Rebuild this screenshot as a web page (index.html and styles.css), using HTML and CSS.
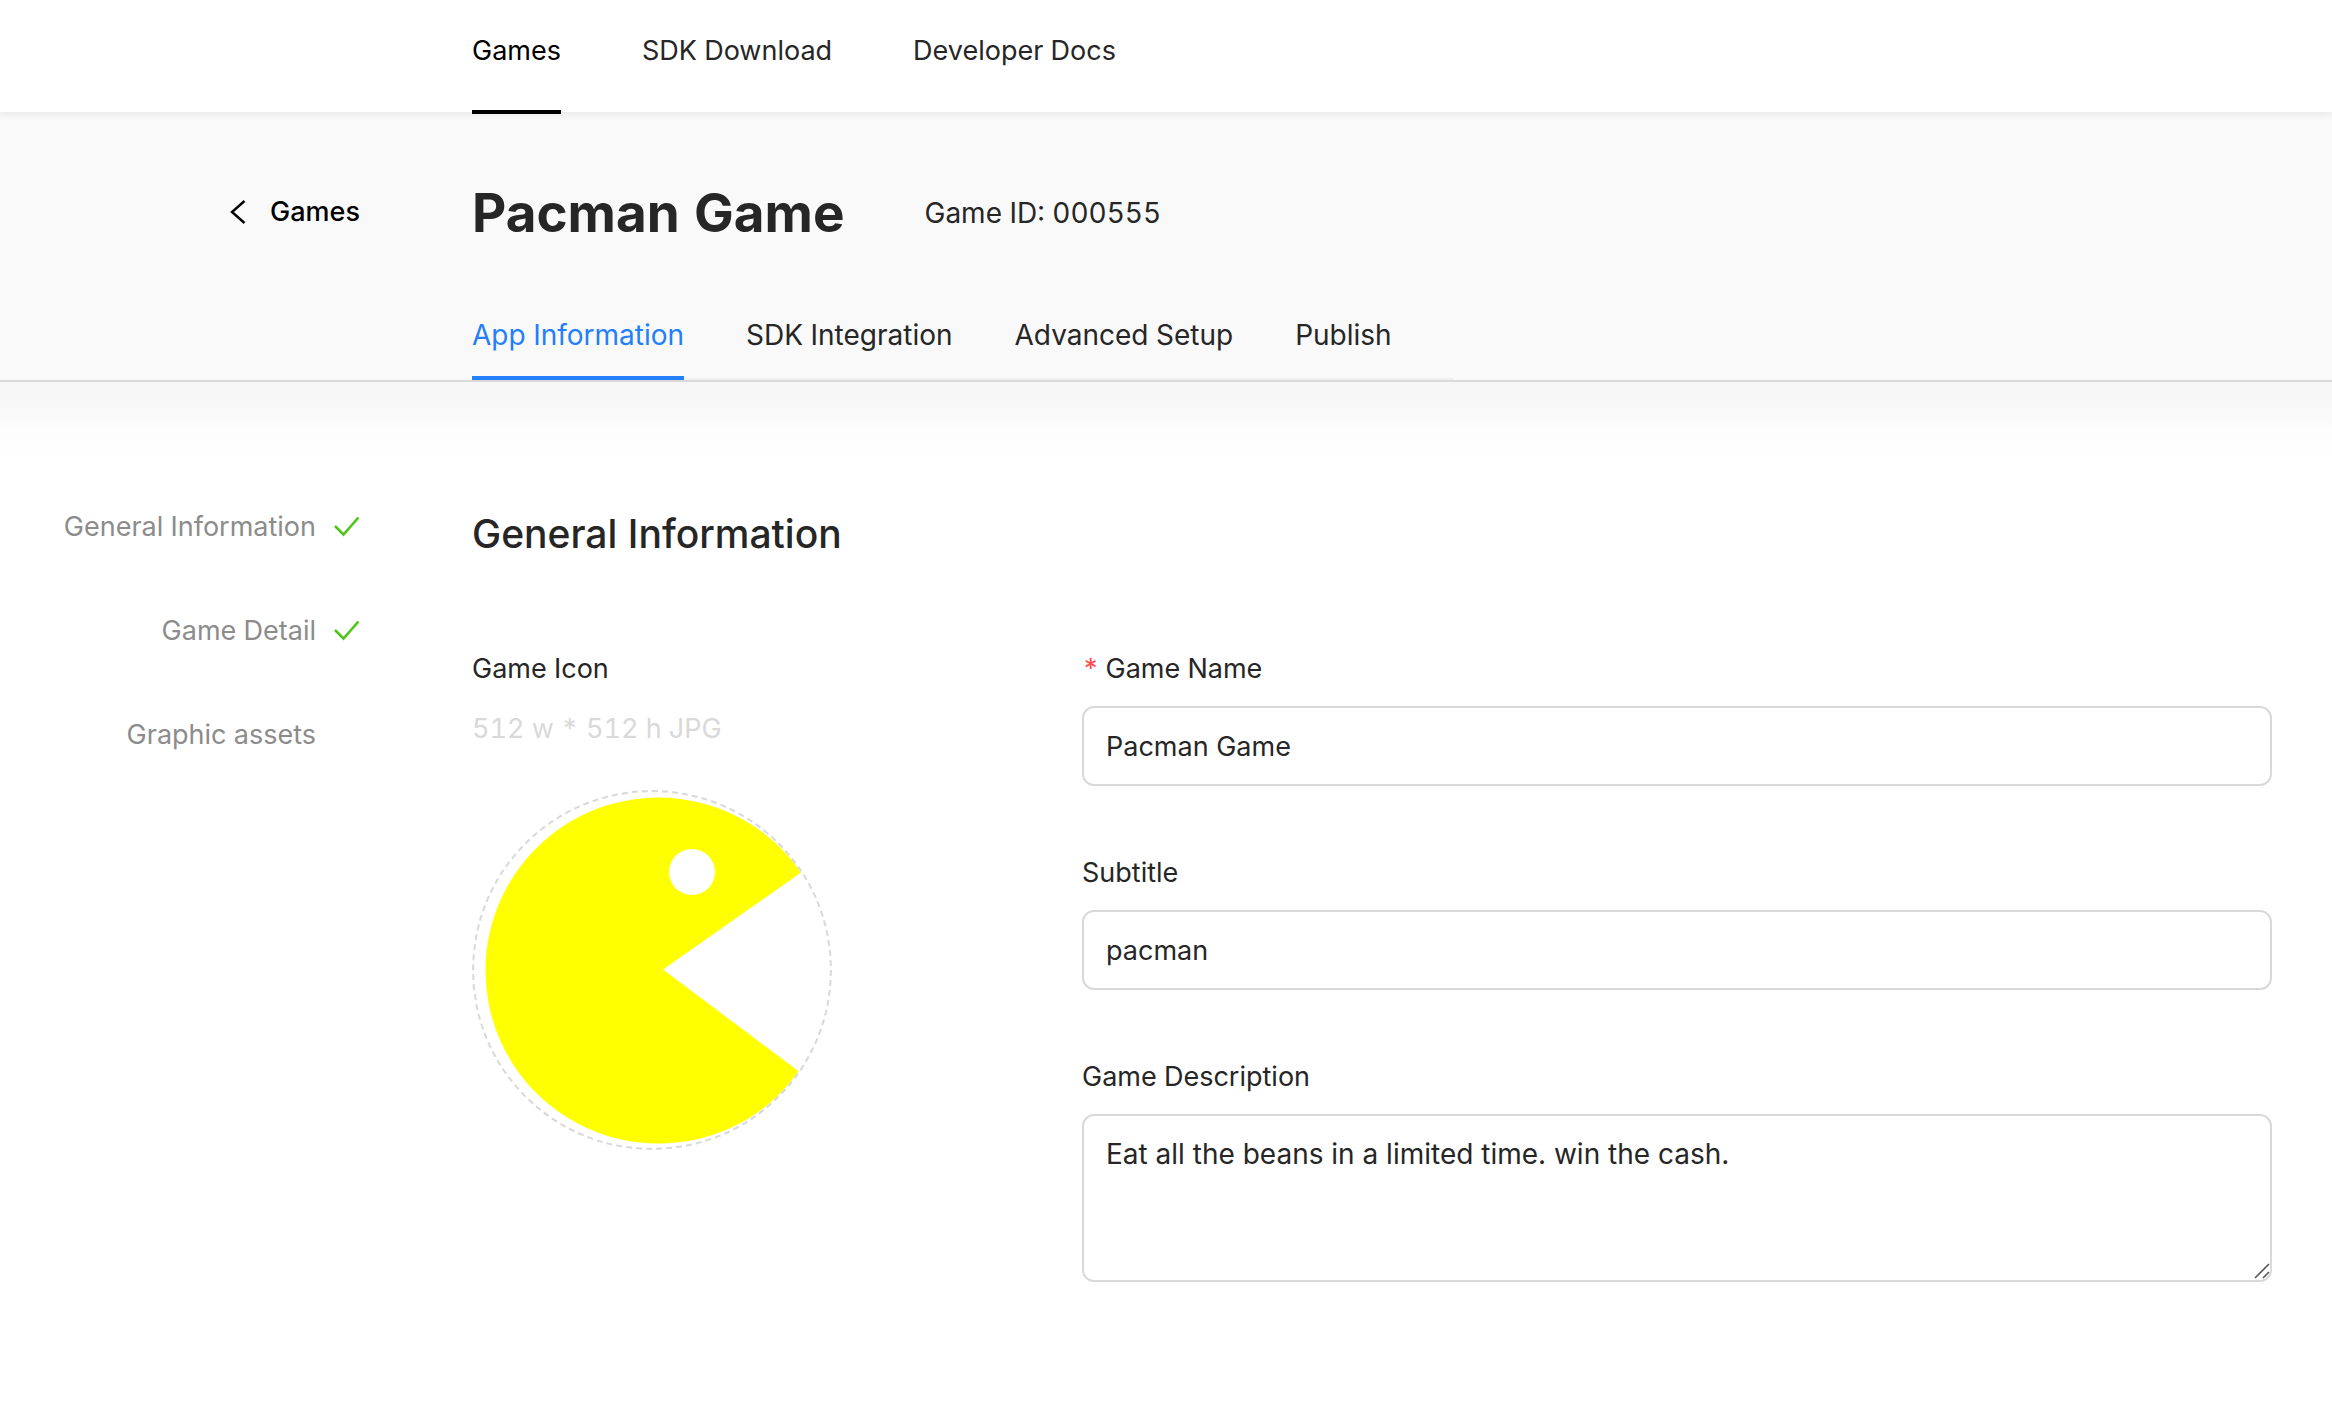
FILE: index.html
```html
<!DOCTYPE html>
<html lang="en">
<head>
<meta charset="utf-8">
<meta name="viewport" content="width=device-width, initial-scale=1">
<title>Pacman Game</title>
<link rel="stylesheet" href="styles.css">
</head>
<body>
<header class="topbar">
  <nav class="topnav" aria-label="Main">
    <a class="topnav-link is-active" href="#games">Games</a>
    <a class="topnav-link" href="#sdk">SDK Download</a>
    <a class="topnav-link" href="#docs">Developer Docs</a>
  </nav>
</header>

<section class="game-header">
  <a class="back" href="#games">
    <svg class="back-icon" viewBox="0 0 16 24" aria-hidden="true"><path d="M14.500 1 2 12l12.500 11"/></svg>
    Games
  </a>
  <div class="game-main">
    <div class="title-row">
      <h1 class="title">Pacman Game</h1>
      <span class="game-id">Game ID: 000555</span>
    </div>
    <nav class="tabs" aria-label="Game">
      <a class="tab is-active" href="#info">App Information</a>
      <a class="tab" href="#integration">SDK Integration</a>
      <a class="tab" href="#advanced">Advanced Setup</a>
      <a class="tab" href="#publish">Publish</a>
    </nav>
  </div>
</section>

<main class="content">
  <nav class="steps" aria-label="Sections">
    <a class="step" href="#general">General Information
      <svg class="check" viewBox="0 0 26 20" aria-hidden="true"><path d="M1 9 9.500 17.500 24.500 .5"/></svg>
    </a>
    <a class="step" href="#detail">Game Detail
      <svg class="check" viewBox="0 0 26 20" aria-hidden="true"><path d="M1 9 9.500 17.500 24.500 .5"/></svg>
    </a>
    <a class="step" href="#assets">Graphic assets
      <span class="check"></span>
    </a>
  </nav>

  <form class="form" id="general">
    <h2 class="form-title">General Information</h2>
    <div class="form-columns">
      <div class="icon-field">
        <span class="label">Game Icon</span>
        <span class="hint">512 w * 512 h JPG</span>
        <button class="icon-upload" type="button" aria-label="Change game icon">
          <svg viewBox="0 0 356 356" aria-hidden="true">
            <path fill="#ff0" d="M189 177.500 327 80.500A173 173 0 1 0 325 279.500Z"/>
            <circle cx="218" cy="80" r="23" fill="#fff"/>
          </svg>
        </button>
      </div>
      <div class="fields">
        <div class="field">
          <label class="label" for="name"><span class="required">*</span>Game Name</label>
          <input class="control" id="name" type="text" value="Pacman Game" required>
        </div>
        <div class="field">
          <label class="label" for="subtitle">Subtitle</label>
          <input class="control" id="subtitle" type="text" value="pacman">
        </div>
        <div class="field">
          <label class="label" for="description">Game Description</label>
          <div class="area">
            <textarea class="control control-area" id="description">Eat all the beans in a limited time. win the cash.</textarea>
            <svg class="grip" viewBox="0 0 16 16" aria-hidden="true"><path d="M1 15 15 1M9 15l6-6"/></svg>
          </div>
        </div>
      </div>
    </div>
  </form>
</main>
</body>
</html>
```
FILE: styles.css
```css
:root {
  --text: #262626;
  --line: #d9d9d9;
  --blue: #237ffa;
  --gutter: 472px;
}

* {
  box-sizing: border-box;
}

body {
  margin: 0;
  background: #fff;
  color: var(--text);
  font-family: Inter, "Liberation Sans", sans-serif;
  font-size: 27px;
  line-height: 44px;
  font-variant-numeric: tabular-nums;
}

a {
  color: inherit;
  text-decoration: none;
}

.topbar {
  position: relative;
  padding-left: var(--gutter);
  height: 112px;
  background: #fff;
  box-shadow: 0 2px 8px rgba(0, 10, 8, 0.08);
}

.topnav {
  display: flex;
  gap: 81px;
}

.topnav-link {
  padding: 29px 0 37px;
  border-bottom: 4px solid transparent;
}

.topnav-link.is-active {
  border-color: #000;
  color: #000;
}

.game-header {
  display: grid;
  grid-template-columns: var(--gutter) 1fr;
  background: #f9f9f9;
  border-bottom: 2px solid var(--line);
}

.back {
  display: flex;
  align-items: center;
  justify-content: flex-end;
  gap: 24px;
  height: 44px;
  margin-top: 78px;
  padding-right: 112px;
  color: #000;
  font-weight: 500;
}

.back-icon {
  width: 16px;
  height: 24px;
  fill: none;
  stroke: currentColor;
  stroke-width: 2.4;
}

.title-row {
  display: flex;
  align-items: center;
  gap: 80px;
  padding-top: 65px;
}

.title {
  margin: 0;
  font-size: 53px;
  line-height: 72px;
  font-weight: 700;
}

.game-id,
.tab {
  font-size: 28px;
}

.tabs {
  display: inline-flex;
  gap: 62px;
  margin-top: 40px;
  padding-right: 62px;
  box-shadow: inset 0 -2px #f0f0f0;
  vertical-align: top;
}

.tab {
  padding: 24px 0 19px;
  border-bottom: 4px solid transparent;
}

.tab.is-active {
  border-color: var(--blue);
  color: var(--blue);
}

.content {
  display: grid;
  grid-template-columns: var(--gutter) 1fr;
  padding: 123px 60px 120px 0;
  background: linear-gradient(#f6f6f6, #fafafa 40px, #fdfdfd 48px, #fff 90px) no-repeat;
}

.steps {
  display: flex;
  flex-direction: column;
  gap: 60px;
  padding-right: 112px;
  color: #8c8c8c;
}

.step {
  display: flex;
  align-items: center;
  justify-content: flex-end;
  gap: 18px;
}

.check {
  width: 26px;
  height: 20px;
  fill: none;
  stroke: #52c41a;
  stroke-width: 2.6;
}

.form-title {
  margin: 0;
  padding-top: 1px;
  font-size: 39px;
  line-height: 56px;
  font-weight: 500;
}

.form-columns {
  display: grid;
  grid-template-columns: 360px 1fr;
  gap: 250px;
  padding-top: 85px;
}

.icon-field {
  display: flex;
  flex-direction: column;
}

.label {
  display: block;
}

.hint {
  margin-top: 16px;
  color: var(--line);
}

.icon-upload {
  width: 360px;
  height: 360px;
  margin-top: 39px;
  padding: 0;
  overflow: hidden;
  border: 2px dashed var(--line);
  border-radius: 50%;
  background: #fff;
}

.icon-upload svg {
  display: block;
}

.fields {
  display: flex;
  flex-direction: column;
  gap: 65px;
}

.required {
  margin-right: 6px;
  color: #ff4d4f;
}

.control {
  display: block;
  width: 100%;
  height: 80px;
  margin-top: 15px;
  padding: 16px 22px;
  border: 2px solid var(--line);
  border-radius: 12px;
  background: #fff;
  color: inherit;
  font-family: inherit;
  font-size: 27px;
  line-height: 44px;
}

.control-area {
  height: 168px;
  font-size: 28px;
  resize: none;
}

.area {
  position: relative;
}

.grip {
  position: absolute;
  right: 2px;
  bottom: 3px;
  width: 16px;
  height: 16px;
  stroke: #555;
  stroke-width: 1.6;
}
```
